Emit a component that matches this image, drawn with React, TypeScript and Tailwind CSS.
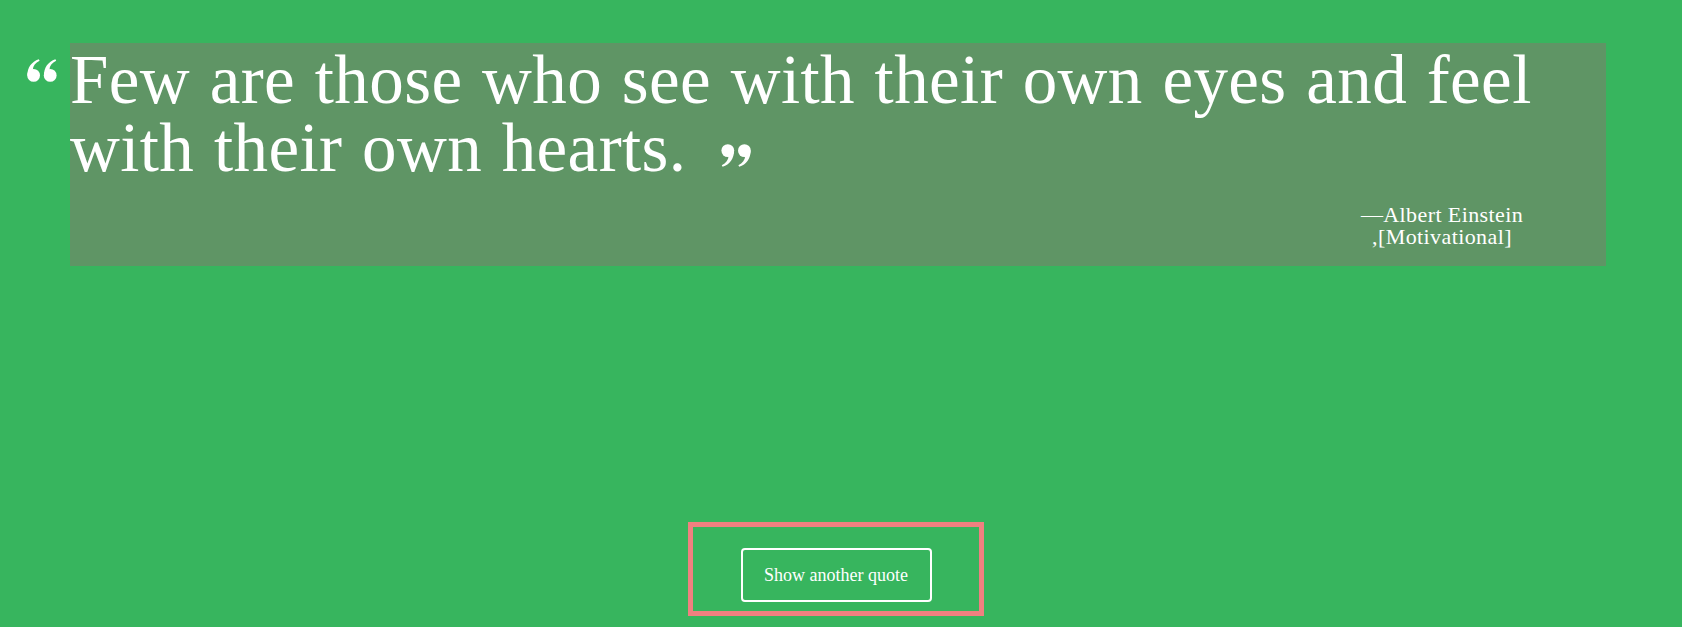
import React from "react"

function OpenQuote({ className }: { className?: string }) {
  return (
    <svg viewBox="0 0 30 23" className={className} fill="currentColor">
      <g>
        <circle cx="6.6" cy="16.4" r="6.4" />
        <path d="M0.4 16.6 C0.2 8.6 4.6 2.6 11.8 0.2 L12.6 1.8 C8.4 3.8 6 7 5.8 11 Z" />
      </g>
      <g transform="translate(16.6 0)">
        <circle cx="6.6" cy="16.4" r="6.4" />
        <path d="M0.4 16.6 C0.2 8.6 4.6 2.6 11.8 0.2 L12.6 1.8 C8.4 3.8 6 7 5.8 11 Z" />
      </g>
    </svg>
  )
}

function CloseQuote({ className }: { className?: string }) {
  return (
    <svg viewBox="0 0 30 23" className={className} fill="currentColor">
      <g transform="rotate(180 15 11.5)">
        <g>
          <circle cx="6.6" cy="16.4" r="6.4" />
          <path d="M0.4 16.6 C0.2 8.6 4.6 2.6 11.8 0.2 L12.6 1.8 C8.4 3.8 6 7 5.8 11 Z" />
        </g>
        <g transform="translate(16.6 0)">
          <circle cx="6.6" cy="16.4" r="6.4" />
          <path d="M0.4 16.6 C0.2 8.6 4.6 2.6 11.8 0.2 L12.6 1.8 C8.4 3.8 6 7 5.8 11 Z" />
        </g>
      </g>
    </svg>
  )
}

export default function App() {
  return (
    <div
      className="min-h-[627px] w-full bg-[#37b55e] text-white overflow-hidden"
      style={{ fontFamily: '"Liberation Serif", "Times New Roman", serif' }}
    >
      {/* Quote card */}
      <div className="flex pt-[43px] pl-[27px] pr-[76px]">
        <OpenQuote className="w-[30px] h-[23px] mt-[16px] mr-[13px] shrink-0 text-white" />
        <div className="flex-1 bg-[#5f9565] pt-[3px] pb-[18px]">
          <p className="text-[69px] leading-[68px] tracking-[0.4px] [word-spacing:2px]">
            Few are those who see with their own eyes and feel
            <br />
            with their own hearts.
            <CloseQuote className="inline-block w-[30px] h-[23px] ml-[34px] align-[4px] text-white" />
          </p>
          <div className="flex justify-end pr-[64px] mt-[22px]">
            <div className="w-[200px] text-center text-[22px] leading-[22px] tracking-[0.4px]">
              —Albert Einstein
              <br />
              ,[Motivational]
            </div>
          </div>
        </div>
      </div>

      {/* Button */}
      <div className="flex justify-center mt-[256px]">
        <div className="mr-[10px] w-[296px] h-[94px] border-[5px] border-[#f08080] flex justify-center pt-[21px]">
          <button className="w-[191px] h-[54px] border-2 border-white rounded-[4px] text-[18px] text-white">
            Show another quote
          </button>
        </div>
      </div>
    </div>
  )
}
